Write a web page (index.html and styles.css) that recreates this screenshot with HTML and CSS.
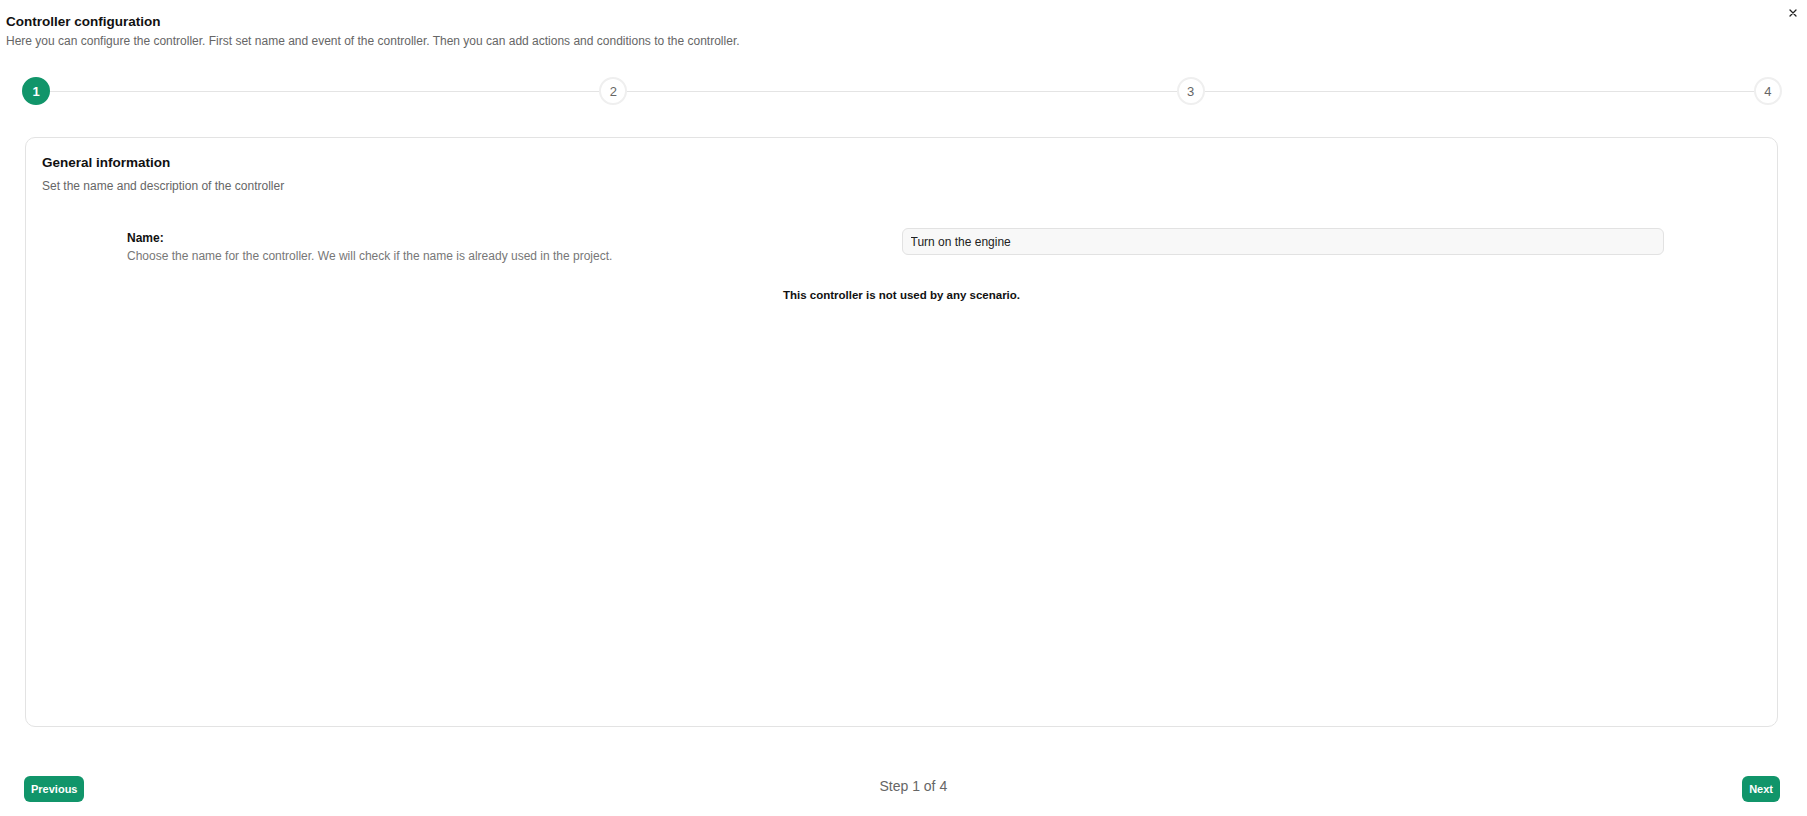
FILE: index.html
```html
<!DOCTYPE html>
<html lang="en">
<head>
    <meta charset="UTF-8">
    <meta name="viewport" content="width=device-width, initial-scale=1.0">
    <title>Controller configuration</title>
    <link rel="stylesheet" href="styles.css">
</head>
<body>

    <div class="dialog">
        <!-- Close button -->
        <button class="close-button" aria-label="Close">
            <svg width="8" height="8" viewBox="0 0 8 8">
                <path d="M1 1 L7 7 M7 1 L1 7" stroke="#222" stroke-width="1.3" stroke-linecap="round"/>
            </svg>
        </button>

        <div class="dialog-header">
            <h1>Controller configuration</h1>
            <p>Here you can configure the controller. First set name and event of the controller. Then you can add actions and conditions to the controller.</p>
        </div>

        <!-- Wizard steps -->
        <div class="stepper">
            <span class="step active">1</span>
            <span class="step-line"></span>
            <span class="step">2</span>
            <span class="step-line"></span>
            <span class="step">3</span>
            <span class="step-line"></span>
            <span class="step">4</span>
        </div>

        <div class="card">
            <h2>General information</h2>
            <p class="card-desc">Set the name and description of the controller</p>

            <div class="form-row">
                <div class="field-info">
                    <label for="controllerName">Name:</label>
                    <p>Choose the name for the controller. We will check if the name is already used in the project.</p>
                </div>
                <div class="field-input">
                    <input id="controllerName" type="text" value="Turn on the engine">
                </div>
            </div>

            <p class="usage">This controller is not used by any scenario.</p>
        </div>

        <div class="wizard-footer">
            <button class="btn">Previous</button>
            <span class="step-count">Step 1 of 4</span>
            <button class="btn">Next</button>
        </div>
    </div>

</body>
</html>
```

FILE: styles.css
```css
body {
    margin: 0;
    background-color: white;
    color: #111;
    font-family: 'Liberation Sans', Arial, sans-serif;
}

.dialog {
    position: relative;
}

.close-button {
    position: absolute;
    top: 9px;
    right: 10px;
    width: 8px;
    height: 8px;
    padding: 0;
    border: none;
    background: none;
    cursor: pointer;
}

.close-button svg {
    display: block;
}

.dialog-header {
    padding: 13px 6px 0;
}

.dialog-header h1 {
    margin: 0;
    font-size: 13.5px;
    line-height: 18px;
    font-weight: bold;
}

.dialog-header p {
    margin: 2px 0 0;
    font-size: 12px;
    line-height: 16px;
    color: #666;
}

/* stepper */
.stepper {
    display: flex;
    align-items: center;
    margin: 28px 25px 0 22px;
}

.step {
    box-sizing: border-box;
    width: 28px;
    height: 28px;
    border-radius: 50%;
    border: 2px solid #efefef;
    background-color: white;
    color: #666;
    font-size: 13px;
    display: flex;
    align-items: center;
    justify-content: center;
    flex-shrink: 0;
}

.step.active {
    border-color: #11956a;
    background-color: #11956a;
    color: white;
    font-weight: bold;
}

.step-line {
    flex: 1;
    height: 1px;
    background-color: #e4e4e4;
}

/* card */
.card {
    box-sizing: border-box;
    height: 590px;
    margin: 32px 29px 0 25px;
    padding: 16px;
    border: 1px solid #e3e3e3;
    border-radius: 10px;
}

.card h2 {
    margin: 0;
    font-size: 13.5px;
    line-height: 18px;
    font-weight: bold;
}

.card-desc {
    margin: 6px 0 0;
    font-size: 12px;
    line-height: 16px;
    color: #666;
}

.form-row {
    display: grid;
    grid-template-columns: 1fr 1fr;
    margin-top: 34px;
}

.field-info {
    padding: 2px 0 0 85px;
}

.field-info label {
    display: block;
    font-size: 12px;
    line-height: 16px;
    font-weight: bold;
}

.field-info p {
    margin: 2px 0 0;
    font-size: 12px;
    line-height: 16px;
    color: #777;
}

.field-input {
    padding-right: 97px;
}

.field-input input {
    box-sizing: border-box;
    width: 100%;
    height: 27px;
    padding: 0 8px;
    border: 1px solid #e2e2e2;
    border-radius: 6px;
    background-color: #f8f8f8;
    color: #222;
    font-family: 'Liberation Sans', Arial, sans-serif;
    font-size: 12px;
}

.usage {
    margin: 23px 0 0;
    text-align: center;
    font-size: 11.5px;
    line-height: 16px;
    font-weight: bold;
}

/* footer */
.wizard-footer {
    display: flex;
    justify-content: space-between;
    align-items: center;
    margin: 49px 27px 0 24px;
}

.btn {
    height: 26px;
    padding: 0 7px;
    border: none;
    border-radius: 6px;
    background-color: #11956a;
    color: white;
    font-family: 'Liberation Sans', Arial, sans-serif;
    font-size: 11px;
    font-weight: bold;
    cursor: pointer;
}

.step-count {
    margin-bottom: 6px;
    font-size: 14px;
    line-height: 16px;
    color: #666;
}
```
